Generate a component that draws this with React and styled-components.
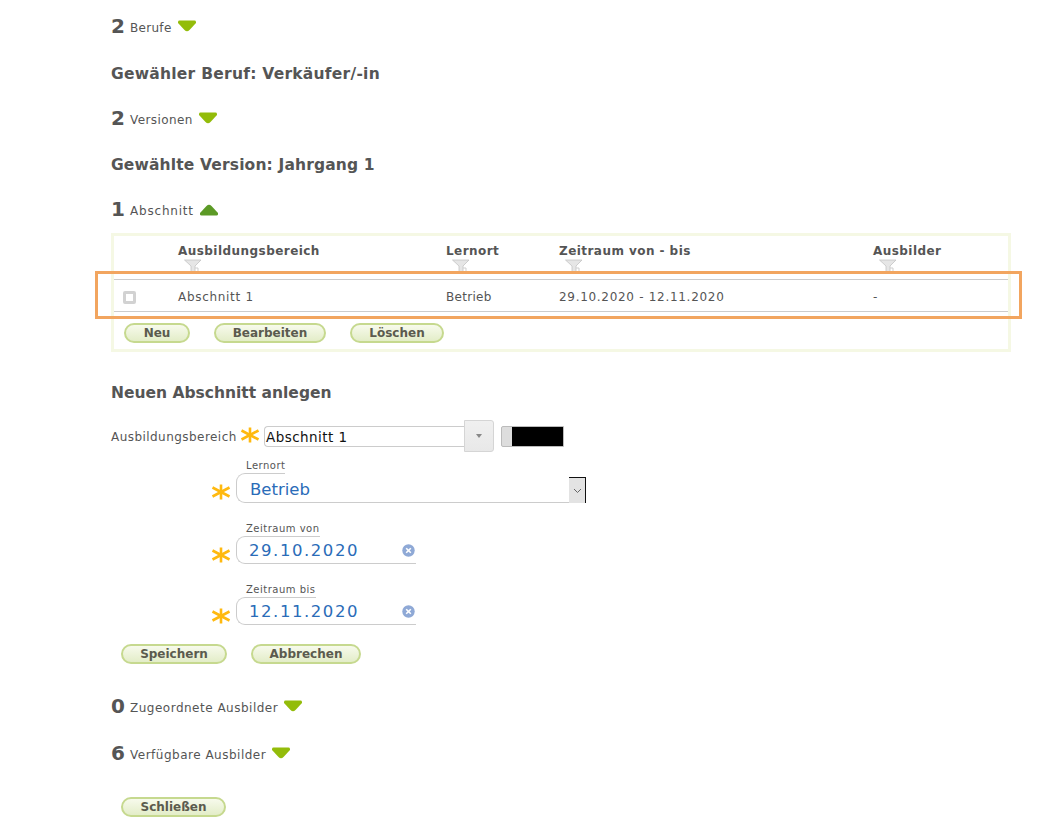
import React from "react";
import styled, { createGlobalStyle } from "styled-components";

const Global = createGlobalStyle`
  html, body { margin: 0; padding: 0; background: #fff; }
  body { font-family: "DejaVu Sans", Verdana, sans-serif; color: #555; }
`;
const Page = styled.div`
  position: relative;
  width: 1038px;
  height: 826px;
  box-sizing: border-box;
  padding: 14px 0 0 111px;
  overflow: hidden;
`;
const CountRow = styled.div`
  display: flex;
  align-items: center;
  height: 24px;
  margin-top: ${p => p.$mt ?? 0}px;
  margin-bottom: ${p => p.$mb ?? 0}px;
`;
const Count = styled.span`
  font-size: 20px;
  font-weight: bold;
  color: #555;
  width: 19px;
`;
const CountLabel = styled.span`
  font-size: 12px;
  letter-spacing: ${p => p.$ls ?? 0.5}px;
  color: #555;
  margin-top: 4px;
  margin-right: 6px;
`;
const Heading = styled.h2`
  margin: ${p => p.$mt ?? 0}px 0 ${p => p.$mb ?? 0}px;
  font-size: 15.5px;
  line-height: 20px;
  font-weight: bold;
  letter-spacing: ${p => p.$ls ?? 0}px;
  color: #555;
`;
const Panel = styled.div`
  width: 900px;
  height: 119px;
  box-sizing: border-box;
  border: 3px solid #f5f8e4;
  margin-top: 12px;
`;
const Grid = styled.div`
  display: grid;
  grid-template-columns: 64px 268px 113px 314px 1fr;
  align-items: start;
`;
const HeadRow = styled(Grid)`
  height: 43px;
`;
const HeadCell = styled.div`
  font-size: 12px;
  font-weight: bold;
  letter-spacing: 0.45px;
  color: #555;
  padding-top: 8px;
  line-height: 15px;
`;
const FilterWrap = styled.div`
  height: 14px;
  padding-left: 6px;
`;
const DataRow = styled(Grid)`
  height: 31px;
  border-top: 1px solid #ccc;
  border-bottom: 1px solid #ccc;
  align-items: center;
`;
const DataCell = styled.div`
  font-size: 12px;
  padding-top: 2px;
  letter-spacing: ${p => p.$ls ?? 0.7}px;
  color: #555;
`;
const CheckBox = styled.span`
  display: block;
  width: 7px;
  height: 7px;
  margin-left: 9px;
  margin-top: 4px;
  border: 3px solid #d2d2d2;
  border-radius: 2px;
  background: #fff;
`;
const ButtonRow = styled.div`
  display: flex;
  gap: ${p => p.$gap ?? 24}px;
  margin: ${p => p.$top ?? 0}px 0 0 ${p => p.$left ?? 10}px;
`;
const PillButton = styled.button`
  box-sizing: border-box;
  width: ${p => p.$w}px;
  height: 20px;
  padding: 0;
  border: 2px solid #c6d98f;
  border-radius: 10px;
  background: linear-gradient(#f7faec, #e3edc8);
  color: #5b5b4e;
  font-family: inherit;
  font-size: 12px;
  font-weight: bold;
  line-height: 14px;
`;
const FieldRow = styled.div`
  display: flex;
  align-items: flex-start;
`;
const AreaLabel = styled.span`
  font-size: 12px;
  letter-spacing: 0.45px;
  color: #555;
  width: 129px;
  margin-top: 10px;
`;
const Star = styled.svg`
  flex: none;
  width: 20px;
  height: 20px;
  margin-top: ${p => p.$top ?? 0}px;
`;
const Combo = styled.div`
  display: flex;
  align-items: flex-start;
  margin-left: 4px;
`;
const ComboInput = styled.div`
  box-sizing: border-box;
  width: 200px;
  height: 21px;
  margin-top: 6px;
  border: 1px solid #ccc;
  border-right: 0;
  border-radius: 4px 0 0 4px;
  color: #111;
  font-size: 13.5px;
  letter-spacing: 0.45px;
  line-height: 20px;
  padding-left: 1px;
`;
const ComboButton = styled.div`
  box-sizing: border-box;
  width: 30px;
  height: 32px;
  border: 1px solid #d5d5d5;
  border-radius: 0 3px 3px 0;
  background: linear-gradient(#f0f0f0, #e8e8e8);
  display: flex;
  align-items: center;
  justify-content: center;
`;
const CaretDown = styled.span`
  width: 0;
  height: 0;
  border-left: 3.5px solid transparent;
  border-right: 3.5px solid transparent;
  border-top: 4px solid #888;
`;
const Swatch = styled.div`
  box-sizing: border-box;
  width: 63px;
  height: 21px;
  margin: 6px 0 0 7px;
  border: 1px solid #bbb;
  border-radius: 2px 0 0 2px;
  background: #ddd;
  padding-left: 10px;
`;
const SwatchFill = styled.div`
  height: 100%;
  background: #000;
`;
const FloatField = styled.div`
  display: flex;
  align-items: flex-start;
  margin: ${p => p.$top ?? 0}px 0 0 100px;
`;
const FieldBody = styled.div`
  margin-left: 5px;
`;
const FloatLabel = styled.div`
  font-size: 10px;
  letter-spacing: 0.5px;
  line-height: 13px;
  color: #555;
  padding-left: 10px;
  height: 14px;
`;
const SelectBox = styled.div`
  box-sizing: border-box;
  position: relative;
  width: 350px;
  height: 30px;
  border: 1px solid #ccc;
  border-right: 0;
  border-radius: 9px 0 0 9px;
  font-size: 16.5px;
  line-height: 31px;
  color: #2a6cb8;
  padding-left: 13px;
  &::before {
    content: "";
    position: absolute;
    top: -1px;
    right: 0;
    left: ${p => p.$gap}px;
    height: 1px;
    background: #fff;
  }
`;
const DateBox = styled(SelectBox)`
  width: 180px;
  height: 28px;
  line-height: 28px;
  letter-spacing: 1.55px;
  padding-left: 12px;
`;
const SelectArrow = styled.div`
  position: absolute;
  right: 0;
  top: 3px;
  width: 17px;
  height: 26px;
  box-sizing: border-box;
  background: #e3e3e3;
  border-right: 1px solid #111;
  border-top: 1px solid #111;
  display: flex;
  align-items: center;
  justify-content: center;
`;
const ClearIcon = styled.svg`
  position: absolute;
  right: 1px;
  top: 7px;
  width: 13px;
  height: 13px;
`;
const Overlay = styled.div`
  position: absolute;
  left: 95px;
  top: 271px;
  width: 927px;
  height: 48px;
  box-sizing: border-box;
  border: 3px solid #f2a55f;
  pointer-events: none;
`;

const Triangle = ({ up }) => (
  <svg width="18" height="12" viewBox="0 0 18 12" style={{ marginTop: up ? 2 : 0 }}>
    <path
      d={up
        ? "M6.5 2 Q9 -0.5 11.5 2 L18 9 Q18.5 11.5 16.5 11.5 H1.5 Q-0.5 11.5 0 9 Z"
        : "M1.5 0.5 H16.5 Q18.5 0.5 18 3 L11.5 10 Q9 12.5 6.5 10 L0 3 Q-0.5 0.5 1.5 0.5 Z"}
      fill={up ? "#5c9a26" : "#93bc0a"}
    />
  </svg>
);
const Funnel = () => (
  <svg width="18" height="14" viewBox="0 0 18 14" style={{ display: "block" }}>
    <path d="M0.5 1 H17 L11 7 V14 H7 V7 Z" fill="#e6e6e6" stroke="#c4c4c4" strokeWidth="0.8" />
    <path d="M11 9 h3 v4 h-3" fill="none" stroke="#cfcfcf" />
  </svg>
);
const Asterisk = ({ top }) => (
  <Star viewBox="0 0 20 20" $top={top}>
    <g stroke="#ffb90f" strokeWidth="2.6">
      <path d="M10 2.5 V17.5" />
      <path d="M1.5 5.5 L18.5 14.5" />
      <path d="M18.5 5.5 L1.5 14.5" />
    </g>
  </Star>
);
const Clear = () => (
  <ClearIcon viewBox="0 0 13 13">
    <circle cx="6.5" cy="6.5" r="6.2" fill="#8fa9d6" />
    <path d="M4.2 4.2 L8.8 8.8 M8.8 4.2 L4.2 8.8" stroke="#fff" strokeWidth="1.6" />
  </ClearIcon>
);
const Chevron = () => (
  <svg width="9" height="6" viewBox="0 0 9 6">
    <path d="M1 1 L4.5 4.5 L8 1" fill="none" stroke="#666" />
  </svg>
);

const columns = ["Ausbildungsbereich", "Lernort", "Zeitraum von - bis", "Ausbilder"];

export default function App() {
  return (
    <Page>
      <Global />
      <CountRow $mb={26}><Count>2</Count><CountLabel $ls={0.3}>Berufe</CountLabel><Triangle /></CountRow>
      <Heading $ls={0.25} $mb={22}>Gewähler Beruf: Verkäufer/-in</Heading>
      <CountRow $mb={25}><Count>2</Count><CountLabel $ls={0.4}>Versionen</CountLabel><Triangle /></CountRow>
      <Heading $ls={0.15} $mb={22}>Gewählte Version: Jahrgang 1</Heading>
      <CountRow><Count>1</Count><CountLabel $ls={0.8}>Abschnitt</CountLabel><Triangle up /></CountRow>

      <Panel>
        <HeadRow>
          <div />
          {columns.map(c => (
            <HeadCell key={c}>{c}<FilterWrap><Funnel /></FilterWrap></HeadCell>
          ))}
        </HeadRow>
        <DataRow>
          <div><CheckBox /></div>
          <DataCell>Abschnitt 1</DataCell>
          <DataCell $ls={0.3}>Betrieb</DataCell>
          <DataCell>29.10.2020 - 12.11.2020</DataCell>
          <DataCell>-</DataCell>
        </DataRow>
        <ButtonRow $top={11}>
          <PillButton $w={66}>Neu</PillButton>
          <PillButton $w={112}>Bearbeiten</PillButton>
          <PillButton $w={94}>Löschen</PillButton>
        </ButtonRow>
      </Panel>

      <Heading $mt={31} $mb={17}>Neuen Abschnitt anlegen</Heading>

      <FieldRow>
        <AreaLabel>Ausbildungsbereich</AreaLabel>
        <Asterisk top={5} />
        <Combo>
          <ComboInput>Abschnitt 1</ComboInput>
          <ComboButton><CaretDown /></ComboButton>
          <Swatch><SwatchFill /></Swatch>
        </Combo>
      </FieldRow>

      <FloatField $top={7}>
        <Asterisk top={23} />
        <FieldBody>
          <FloatLabel>Lernort</FloatLabel>
          <SelectBox $gap={48}>Betrieb<SelectArrow><Chevron /></SelectArrow></SelectBox>
        </FieldBody>
      </FloatField>
      <FloatField $top={19}>
        <Asterisk top={23} />
        <FieldBody>
          <FloatLabel>Zeitraum von</FloatLabel>
          <DateBox $gap={83}>29.10.2020<Clear /></DateBox>
        </FieldBody>
      </FloatField>
      <FloatField $top={18}>
        <Asterisk top={23} />
        <FieldBody>
          <FloatLabel>Zeitraum bis</FloatLabel>
          <DateBox $gap={79}>12.11.2020<Clear /></DateBox>
        </FieldBody>
      </FloatField>

      <ButtonRow $top={18} $left={10} $gap={24}>
        <PillButton $w={106}>Speichern</PillButton>
        <PillButton $w={110}>Abbrechen</PillButton>
      </ButtonRow>

      <CountRow $mt={30} $mb={23}><Count>0</Count><CountLabel>Zugeordnete Ausbilder</CountLabel><Triangle /></CountRow>
      <CountRow $mb={32}><Count>6</Count><CountLabel>Verfügbare Ausbilder</CountLabel><Triangle /></CountRow>
      <ButtonRow $left={10}><PillButton $w={105}>Schließen</PillButton></ButtonRow>

      <Overlay />
    </Page>
  );
}
